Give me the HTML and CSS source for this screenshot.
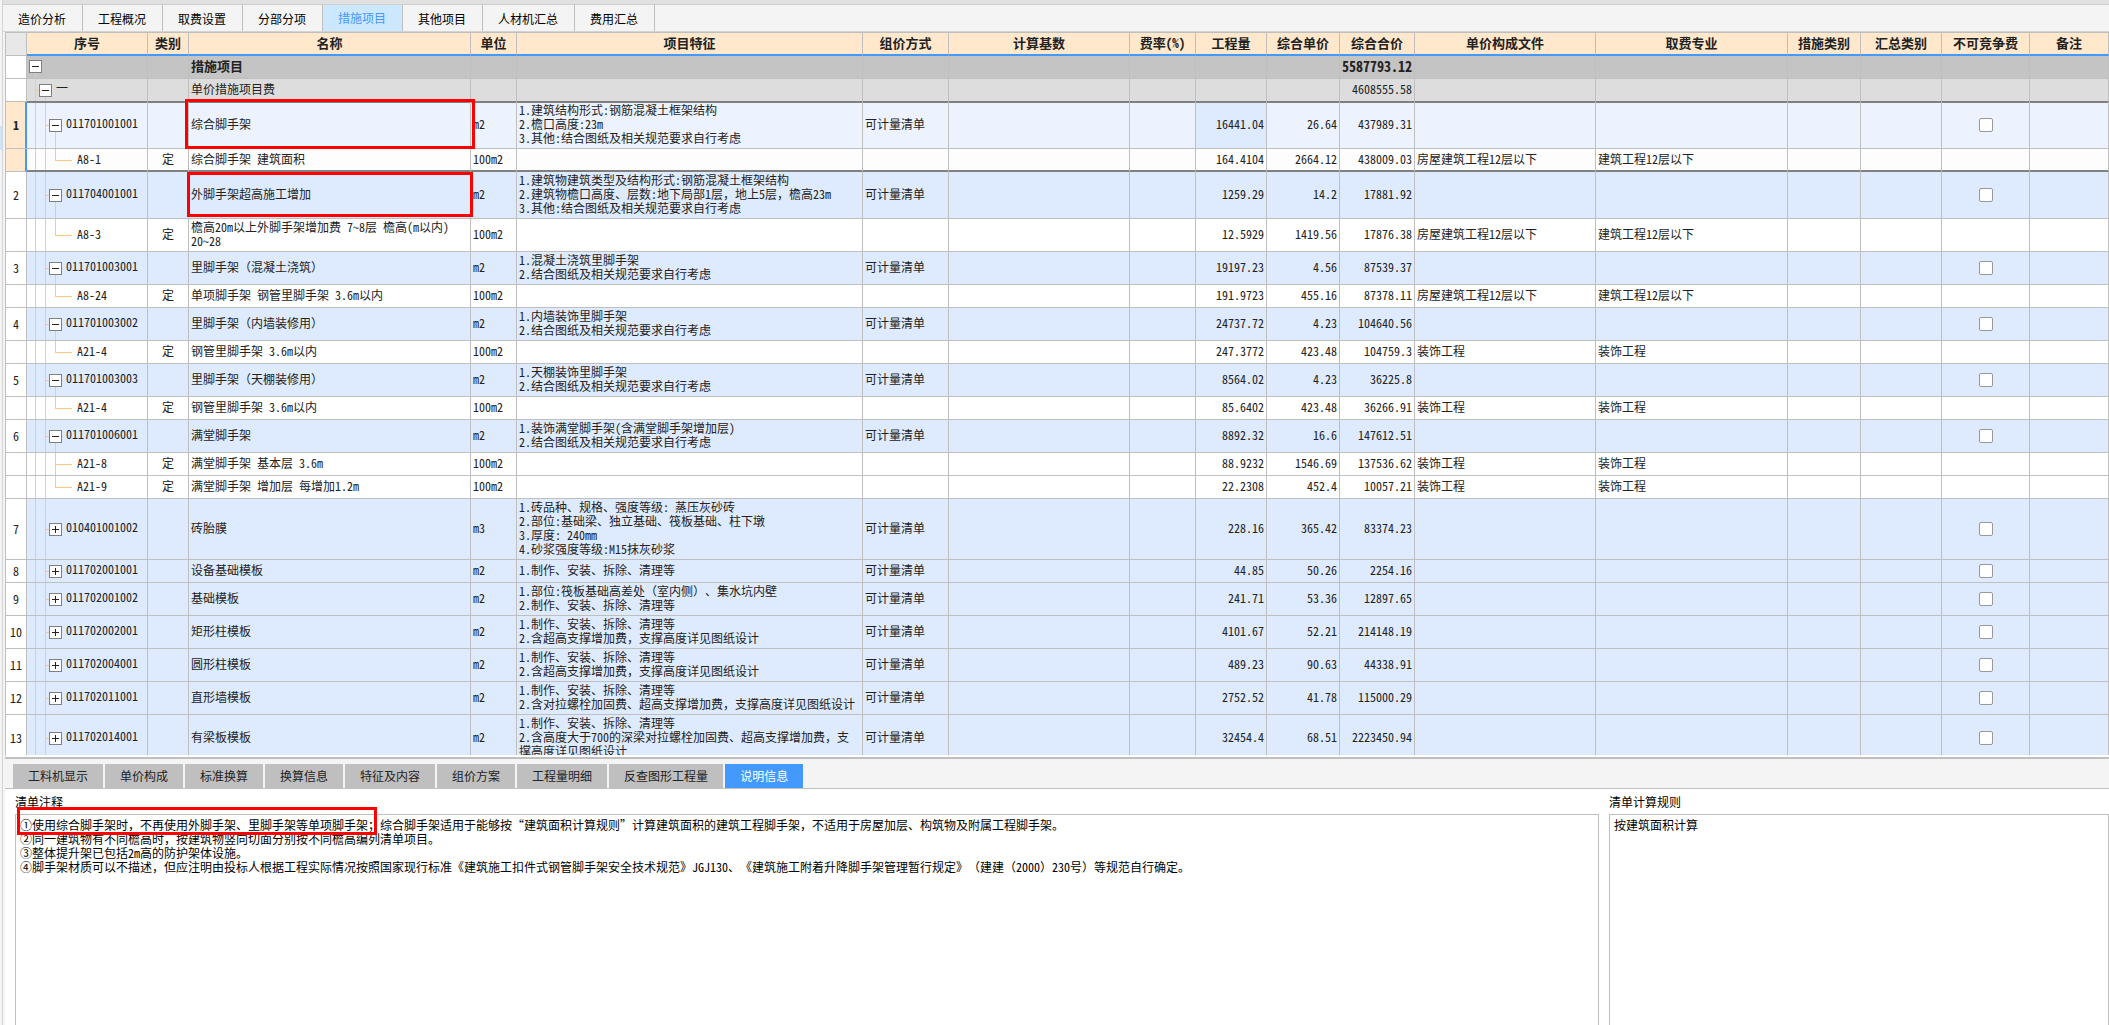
FILE: index.html
```html
<!DOCTYPE html>
<html lang="zh-CN">
<head>
<meta charset="utf-8">
<meta name="viewport" content="width=device-width, initial-scale=1">
<title>措施项目</title>
<link rel="stylesheet" href="styles.css">
</head>
<body>
<div class="app">
  <div class="rail"><div class="rail-mark"></div></div>
  <nav class="tabs">
    <button type="button">造价分析</button>
    <button type="button">工程概况</button>
    <button type="button">取费设置</button>
    <button type="button">分部分项</button>
    <button type="button" class="active">措施项目</button>
    <button type="button">其他项目</button>
    <button type="button">人材机汇总</button>
    <button type="button">费用汇总</button>
  </nav>

  <main class="grid-pane">
    <table class="grid">
      <colgroup>
        <col class="w-row"><col class="w-code"><col class="w-kind"><col class="w-name"><col class="w-unit"><col class="w-feature"><col class="w-method"><col class="w-base"><col class="w-rate"><col class="w-qty"><col class="w-price"><col class="w-total"><col class="w-file"><col class="w-major"><col class="w-mtype"><col class="w-stype"><col class="w-fixed"><col>
      </colgroup>
      <thead>
        <tr><th class="corner"></th><th>序号</th><th>类别</th><th>名称</th><th>单位</th><th>项目特征</th><th>组价方式</th><th>计算基数</th><th>费率(%)</th><th>工程量</th><th>综合单价</th><th>综合合价</th><th>单价构成文件</th><th>取费专业</th><th>措施类别</th><th>汇总类别</th><th>不可竞争费</th><th>备注</th></tr>
      </thead>
      <tbody>
        <tr class="root"><td><td class="tree"><button type="button" class="box minus" aria-label="折叠"></button><td><td>措施项目<td><td><td><td><td><td><td><td class="num">5587793.12<td><td><td><td><td><td></tr>
        <tr class="group"><td><td class="tree"><button type="button" class="box minus" aria-label="折叠"></button>一<td><td>单价措施项目费<td><td><td><td><td><td><td><td class="num">4608555.58<td><td><td><td><td><td></tr>

        <tr class="item sel first"><td>1<td class="tree open"><button type="button" class="box minus" aria-label="折叠"></button>011701001001<td><td class="marked">综合脚手架<span class="callout outer"></span><td>m2<td>1.建筑结构形式:钢筋混凝土框架结构<br>2.檐口高度:23m<br>3.其他:结合图纸及相关规范要求自行考虑<td>可计量清单<td><td><td class="num current">16441.04<td class="num">26.64<td class="num">437989.31<td><td><td><td><td class="check"><input type="checkbox" aria-label="不可竞争费 1"><td></tr>
        <tr class="sub sel last"><td><td class="tree end">A8-1<td>定<td>综合脚手架 建筑面积<td>100m2<td><td><td><td><td class="num">164.4104<td class="num">2664.12<td class="num">438009.03<td>房屋建筑工程12层以下<td>建筑工程12层以下<td><td><td><td></tr>

        <tr class="item"><td>2<td class="tree open"><button type="button" class="box minus" aria-label="折叠"></button>011704001001<td><td class="marked">外脚手架超高施工增加<span class="callout inner"></span><td>m2<td>1.建筑物建筑类型及结构形式:钢筋混凝土框架结构<br>2.建筑物檐口高度、层数:地下局部1层，地上5层，檐高23m<br>3.其他:结合图纸及相关规范要求自行考虑<td>可计量清单<td><td><td class="num">1259.29<td class="num">14.2<td class="num">17881.92<td><td><td><td><td class="check"><input type="checkbox" aria-label="不可竞争费 2"><td></tr>
        <tr class="sub"><td><td class="tree end">A8-3<td>定<td>檐高20m以上外脚手架增加费 7~8层 檐高(m以内) 20~28<td>100m2<td><td><td><td><td class="num">12.5929<td class="num">1419.56<td class="num">17876.38<td>房屋建筑工程12层以下<td>建筑工程12层以下<td><td><td><td></tr>

        <tr class="item"><td>3<td class="tree open"><button type="button" class="box minus" aria-label="折叠"></button>011701003001<td><td>里脚手架（混凝土浇筑）<td>m2<td>1.混凝土浇筑里脚手架<br>2.结合图纸及相关规范要求自行考虑<td>可计量清单<td><td><td class="num">19197.23<td class="num">4.56<td class="num">87539.37<td><td><td><td><td class="check"><input type="checkbox" aria-label="不可竞争费 3"><td></tr>
        <tr class="sub"><td><td class="tree end">A8-24<td>定<td>单项脚手架 钢管里脚手架 3.6m以内<td>100m2<td><td><td><td><td class="num">191.9723<td class="num">455.16<td class="num">87378.11<td>房屋建筑工程12层以下<td>建筑工程12层以下<td><td><td><td></tr>

        <tr class="item"><td>4<td class="tree open"><button type="button" class="box minus" aria-label="折叠"></button>011701003002<td><td>里脚手架（内墙装修用）<td>m2<td>1.内墙装饰里脚手架<br>2.结合图纸及相关规范要求自行考虑<td>可计量清单<td><td><td class="num">24737.72<td class="num">4.23<td class="num">104640.56<td><td><td><td><td class="check"><input type="checkbox" aria-label="不可竞争费 4"><td></tr>
        <tr class="sub"><td><td class="tree end">A21-4<td>定<td>钢管里脚手架 3.6m以内<td>100m2<td><td><td><td><td class="num">247.3772<td class="num">423.48<td class="num">104759.3<td>装饰工程<td>装饰工程<td><td><td><td></tr>

        <tr class="item"><td>5<td class="tree open"><button type="button" class="box minus" aria-label="折叠"></button>011701003003<td><td>里脚手架（天棚装修用）<td>m2<td>1.天棚装饰里脚手架<br>2.结合图纸及相关规范要求自行考虑<td>可计量清单<td><td><td class="num">8564.02<td class="num">4.23<td class="num">36225.8<td><td><td><td><td class="check"><input type="checkbox" aria-label="不可竞争费 5"><td></tr>
        <tr class="sub"><td><td class="tree end">A21-4<td>定<td>钢管里脚手架 3.6m以内<td>100m2<td><td><td><td><td class="num">85.6402<td class="num">423.48<td class="num">36266.91<td>装饰工程<td>装饰工程<td><td><td><td></tr>

        <tr class="item"><td>6<td class="tree open"><button type="button" class="box minus" aria-label="折叠"></button>011701006001<td><td>满堂脚手架<td>m2<td>1.装饰满堂脚手架(含满堂脚手架增加层)<br>2.结合图纸及相关规范要求自行考虑<td>可计量清单<td><td><td class="num">8892.32<td class="num">16.6<td class="num">147612.51<td><td><td><td><td class="check"><input type="checkbox" aria-label="不可竞争费 6"><td></tr>
        <tr class="sub"><td><td class="tree">A21-8<td>定<td>满堂脚手架 基本层 3.6m<td>100m2<td><td><td><td><td class="num">88.9232<td class="num">1546.69<td class="num">137536.62<td>装饰工程<td>装饰工程<td><td><td><td></tr>
        <tr class="sub"><td><td class="tree end">A21-9<td>定<td>满堂脚手架 增加层 每增加1.2m<td>100m2<td><td><td><td><td class="num">22.2308<td class="num">452.4<td class="num">10057.21<td>装饰工程<td>装饰工程<td><td><td><td></tr>

        <tr class="item"><td>7<td class="tree"><button type="button" class="box plus" aria-label="展开"></button>010401001002<td><td>砖胎膜<td>m3<td>1.砖品种、规格、强度等级: 蒸压灰砂砖<br>2.部位:基础梁、独立基础、筏板基础、柱下墩<br>3.厚度: 240mm<br>4.砂浆强度等级:M15抹灰砂浆<td>可计量清单<td><td><td class="num">228.16<td class="num">365.42<td class="num">83374.23<td><td><td><td><td class="check"><input type="checkbox" aria-label="不可竞争费 7"><td></tr>
        <tr class="item"><td>8<td class="tree"><button type="button" class="box plus" aria-label="展开"></button>011702001001<td><td>设备基础模板<td>m2<td>1.制作、安装、拆除、清理等<td>可计量清单<td><td><td class="num">44.85<td class="num">50.26<td class="num">2254.16<td><td><td><td><td class="check"><input type="checkbox" aria-label="不可竞争费 8"><td></tr>
        <tr class="item"><td>9<td class="tree"><button type="button" class="box plus" aria-label="展开"></button>011702001002<td><td>基础模板<td>m2<td>1.部位:筏板基础高差处（室内侧）、集水坑内壁<br>2.制作、安装、拆除、清理等<td>可计量清单<td><td><td class="num">241.71<td class="num">53.36<td class="num">12897.65<td><td><td><td><td class="check"><input type="checkbox" aria-label="不可竞争费 9"><td></tr>
        <tr class="item"><td>10<td class="tree"><button type="button" class="box plus" aria-label="展开"></button>011702002001<td><td>矩形柱模板<td>m2<td>1.制作、安装、拆除、清理等<br>2.含超高支撑增加费，支撑高度详见图纸设计<td>可计量清单<td><td><td class="num">4101.67<td class="num">52.21<td class="num">214148.19<td><td><td><td><td class="check"><input type="checkbox" aria-label="不可竞争费 10"><td></tr>
        <tr class="item"><td>11<td class="tree"><button type="button" class="box plus" aria-label="展开"></button>011702004001<td><td>圆形柱模板<td>m2<td>1.制作、安装、拆除、清理等<br>2.含超高支撑增加费，支撑高度详见图纸设计<td>可计量清单<td><td><td class="num">489.23<td class="num">90.63<td class="num">44338.91<td><td><td><td><td class="check"><input type="checkbox" aria-label="不可竞争费 11"><td></tr>
        <tr class="item"><td>12<td class="tree"><button type="button" class="box plus" aria-label="展开"></button>011702011001<td><td>直形墙模板<td>m2<td>1.制作、安装、拆除、清理等<br>2.含对拉螺栓加固费、超高支撑增加费，支撑高度详见图纸设计<td>可计量清单<td><td><td class="num">2752.52<td class="num">41.78<td class="num">115000.29<td><td><td><td><td class="check"><input type="checkbox" aria-label="不可竞争费 12"><td></tr>
        <tr class="item"><td>13<td class="tree"><button type="button" class="box plus" aria-label="展开"></button>011702014001<td><td>有梁板模板<td>m2<td>1.制作、安装、拆除、清理等<br>2.含高度大于700的深梁对拉螺栓加固费、超高支撑增加费，支撑高度详见图纸设计<td>可计量清单<td><td><td class="num">32454.4<td class="num">68.51<td class="num">2223450.94<td><td><td><td><td class="check"><input type="checkbox" aria-label="不可竞争费 13"><td></tr>
      </tbody>
    </table>
  </main>

  <section class="detail">
    <nav class="detail-tabs">
      <button type="button">工料机显示</button>
      <button type="button">单价构成</button>
      <button type="button">标准换算</button>
      <button type="button">换算信息</button>
      <button type="button">特征及内容</button>
      <button type="button">组价方案</button>
      <button type="button">工程量明细</button>
      <button type="button">反查图形工程量</button>
      <button type="button" class="active">说明信息</button>
    </nav>
    <div class="notes">
      <div class="note">
        <label for="note-text">清单注释</label>
        <textarea id="note-text" readonly>①使用综合脚手架时，不再使用外脚手架、里脚手架等单项脚手架；综合脚手架适用于能够按“建筑面积计算规则”计算建筑面积的建筑工程脚手架，不适用于房屋加层、构筑物及附属工程脚手架。
②同一建筑物有不同檐高时，按建筑物竖向切面分别按不同檐高编列清单项目。
③整体提升架已包括2m高的防护架体设施。
④脚手架材质可以不描述，但应注明由投标人根据工程实际情况按照国家现行标准《建筑施工扣件式钢管脚手架安全技术规范》JGJ130、《建筑施工附着升降脚手架管理暂行规定》（建建（2000）230号）等规范自行确定。</textarea>
        <span class="callout line"></span>
      </div>
      <div class="note">
        <label for="rule-text">清单计算规则</label>
        <textarea id="rule-text" readonly>按建筑面积计算</textarea>
      </div>
    </div>
  </section>
</div>
</body>
</html>
```
FILE: styles.css
```css
:root {
  --line: #bfbfbf;
  --panel: #f4f4f4;
  --accent: #4499ff;
  --head: #ffe8cc;
  --item: #deebfe;
  --guide: #ffc880;
}

* { box-sizing: border-box; }

body {
  margin: 0;
  background: var(--panel);
  color: #222;
  font: 12px/14px "Noto Sans Mono CJK SC", "Noto Sans CJK SC", monospace;
  text-spacing-trim: space-all;
}

button, textarea, input {
  margin: 0;
  font: inherit;
  color: inherit;
}

.app {
  display: grid;
  grid-template: 32px minmax(0, 1fr) 268px / 3px minmax(0, 1fr);
  height: 100vh;
}

.rail {
  grid-row: 1 / -1;
  border-right: 1px solid #d4d4d4;
  padding-top: 126px;
}
.rail-mark { height: 24px; background: #cce6ff; }

/* module tabs */
.tabs {
  display: flex;
  border-top: 4px solid #e1e1e1;
  border-bottom: 1px solid #d4d4d4;
  box-shadow: inset 0 1px #cfcfcf;
}
.tabs button {
  padding: 2px 16px 0 15px;
  border: 0;
  border-right: 1px solid var(--line);
  background: none;
  color: #000;
}
.tabs .active {
  margin-top: 1px;
  padding-top: 0;
  background: #cce8ff;
  color: var(--accent);
}

/* bill grid */
.grid-pane {
  overflow: auto;
  scrollbar-width: none;
  margin-left: 2px;
  border-left: 1px solid var(--line);
  border-top: 1px solid var(--line);
  border-bottom: 2px solid #fff;
  background: #fff;
}
.grid {
  width: 100%;
  table-layout: fixed;
  border-collapse: separate;
  border-spacing: 0;
}
.w-row { width: 21px; }
.w-code { width: 121px; }
.w-kind { width: 41px; }
.w-name { width: 282px; }
.w-unit { width: 46px; }
.w-feature { width: 346px; }
.w-method { width: 86px; }
.w-base { width: 181px; }
.w-rate { width: 66px; }
.w-qty { width: 71px; }
.w-price { width: 73px; }
.w-total { width: 75px; }
.w-file { width: 181px; }
.w-major { width: 192px; }
.w-mtype { width: 73px; }
.w-stype { width: 81px; }
.w-fixed { width: 88px; }

th, td {
  height: 23px;
  padding: 1px 2px 3px;
  border-right: 1px solid var(--line);
  border-bottom: 1px solid var(--line);
}
th {
  padding: 0 0 2px;
  border-bottom: 2px solid var(--accent);
  background: var(--head);
  font-size: 13px;
  white-space: nowrap;
}
th.corner { background: #e8e8e8; border-bottom: 1px solid var(--line); }
td:first-child { padding: 2px 0; text-align: center; background: #fff; }
td:nth-child(3) { text-align: center; }
.num { text-align: right; white-space: nowrap; }

.root td:not(:first-child) { background-color: #c4c4c4; font-weight: bold; font-size: 13px; }
.root td.num:not(:first-child) { font-size: 14px; }
.group td:not(:first-child) { background-color: #ddd; border-bottom-color: #808080; }
.item td:not(:first-child) { background-color: var(--item); }

.sel td:first-child {
  background: var(--head);
  border-right-color: var(--accent);
  box-shadow: inset -1px 0 var(--accent);
  font-weight: bold;
}
.item.sel td:not(:first-child) { background-color: #ecf3fe; }
.item.sel td.current { background-color: var(--item); }
.sub.sel td:not(:first-child) { background-color: #fdfdfd; }
.sel.first td:not(:first-child) { box-shadow: inset 0 1px #808080; }
.sel.last td:not(:first-child) { border-bottom-color: #808080; box-shadow: inset 0 -1px #808080; }

/* tree column */
.tree {
  --v: linear-gradient(var(--guide), var(--guide));
  background-repeat: no-repeat;
  white-space: nowrap;
}
.root .tree { background-image: var(--v); background-position: 8px 100%; background-size: 1px 50%; }
.group .tree {
  padding-left: 12px;
  background-image: var(--v), var(--v), var(--v);
  background-position: 8px 0, 18px 100%, 8px 50%;
  background-size: 1px 100%, 1px 50%, 4px 1px;
}
.item .tree {
  padding-left: 22px;
  background-image: var(--v), var(--v), var(--v);
  background-position: 8px 0, 18px 0, 18px 50%;
  background-size: 1px 100%, 1px 100%, 4px 1px;
}
.item .tree.open {
  background-image: var(--v), var(--v), var(--v), var(--v);
  background-position: 8px 0, 18px 0, 18px 50%, 28px 100%;
  background-size: 1px 100%, 1px 100%, 4px 1px, 1px 50%;
}
.sub .tree {
  padding-left: 50px;
  background-image: var(--v), var(--v), var(--v), var(--v);
  background-position: 8px 0, 18px 0, 28px 0, 28px 50%;
  background-size: 1px 100%, 1px 100%, 1px 100%, 17px 1px;
}
.sub .tree.end { background-size: 1px 100%, 1px 100%, 1px 50%, 17px 1px; }

.box {
  width: 13px;
  height: 13px;
  margin-right: 4px;
  padding: 0;
  border: 1px solid #808080;
  vertical-align: middle;
  background: linear-gradient(#222, #222) center / 7px 1px no-repeat, #fff;
}
.box.plus {
  background: linear-gradient(#222, #222) center / 7px 1px no-repeat,
    linear-gradient(#222, #222) center / 1px 7px no-repeat, #fff;
}

td.check { padding: 2px; }
.check input {
  appearance: none;
  display: block;
  width: 14px;
  height: 14px;
  margin: 0 auto;
  border: 1px solid #999;
  border-radius: 2px;
  background: #fff;
}

/* red highlight frames */
.marked, .note { position: relative; }
.callout {
  position: absolute;
  z-index: 1;
  border: 3px solid #f00;
  pointer-events: none;
}
.callout.outer { inset: -3px -5px -1px -4px; }
.callout.inner { inset: 0 -3px 1px -2px; }
.callout.line { left: 2px; top: 18px; width: 360px; height: 28px; }

/* detail panel */
.detail {
  display: flex;
  flex-direction: column;
  margin-left: 2px;
  border-top: 2px solid var(--line);
}
.detail-tabs {
  display: flex;
  gap: 2px;
  padding: 5px 8px 0;
  border-bottom: 1px solid var(--line);
}
.detail-tabs button {
  height: 24px;
  padding: 0 15px;
  border: 0;
  background: var(--line);
}
.detail-tabs .active { background: var(--accent); color: #fff; }

.notes {
  flex: 1;
  display: grid;
  grid-template-columns: minmax(0, 1584fr) minmax(0, 500fr);
  gap: 10px;
  padding-left: 10px;
  background: #fff;
}
.note { display: flex; flex-direction: column; color: #000; }
.note label { padding: 6px 0 5px; }
.note textarea {
  flex: 1;
  padding: 3px 4px;
  border: 1px solid var(--line);
  border-bottom: 0;
  outline: 0;
  resize: none;
  background: #fff;
}
```
